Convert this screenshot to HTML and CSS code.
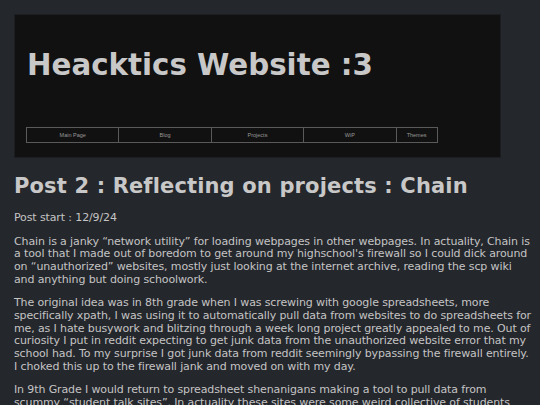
FILE: index.html
```html
<!DOCTYPE html>
<html>
<head>
<meta charset="utf-8">
<link rel="stylesheet" href="styles.css">
</head>
<body>
<div class="header">
  <h1 class="title">Heacktics Website :3</h1>
  <div class="nav">
    <div class="item">Main Page</div>
    <div class="item">Blog</div>
    <div class="item">Projects</div>
    <div class="item">WiP</div>
    <div class="item last">Themes</div>
  </div>
</div>
<div class="content">
  <h2 class="post-title">Post 2 : Reflecting on projects : Chain</h2>
  <p class="para">Post start : 12/9/24</p>
  <p class="para">Chain is a janky “network utility” for loading webpages in other webpages. In actuality, Chain is a tool that I made out of boredom to get around my highschool's firewall so I could dick around on “unauthorized” websites, mostly just looking at the internet archive, reading the scp wiki and anything but doing schoolwork.</p>
  <p class="para">The original idea was in 8th grade when I was screwing with google spreadsheets, more specifically xpath, I was using it to automatically pull data from websites to do spreadsheets for me, as I hate busywork and blitzing through a week long project greatly appealed to me. Out of curiosity I put in reddit expecting to get junk data from the unauthorized website error that my school had. To my surprise I got junk data from reddit seemingly bypassing the firewall entirely. I choked this up to the firewall jank and moved on with my day.</p>
  <p class="para">In 9th Grade I would return to spreadsheet shenanigans making a tool to pull data from scummy “student talk sites”. In actuality these sites were some weird collective of students selling and buying things.</p>
</div>
</body>
</html>
```
FILE: styles.css
```css
html, body {
  margin: 0;
  padding: 0;
  background: #24272c;
}
body {
  padding: 14px 0 14px 14px;
  font-family: "DejaVu Sans", Verdana, sans-serif;
  color: #c4c4c4;
}
.header {
  width: 461px;
  padding: 33px 13px 14px 11px;
  background: #111111;
  border: 1px solid #1c1d20;
}
.title {
  margin: 0 0 45px 1px;
  font-size: 29.3px;
  line-height: 34px;
  font-weight: bold;
  color: #c8c8c8;
}
.nav {
  display: flex;
  height: 16px;
}
.item {
  box-sizing: border-box;
  width: 92.4px;
  height: 16px;
  border: 1px solid #5a5a5a;
  border-right: none;
  font-family: "Liberation Sans", Arial, sans-serif;
  font-size: 5.5px;
  line-height: 14px;
  color: #999999;
  text-align: center;
}
.item.last {
  width: 42px;
  border-right: 1px solid #5a5a5a;
}
.content {
  width: 517px;
}
.post-title {
  margin: 16px 0 14px;
  font-size: 21px;
  letter-spacing: 0.15px;
  font-weight: bold;
  color: #c8c8c8;
}
.para {
  margin: 0 0 11px;
  font-size: 11px;
  letter-spacing: -0.12px;
  line-height: 12.67px;
}
```
